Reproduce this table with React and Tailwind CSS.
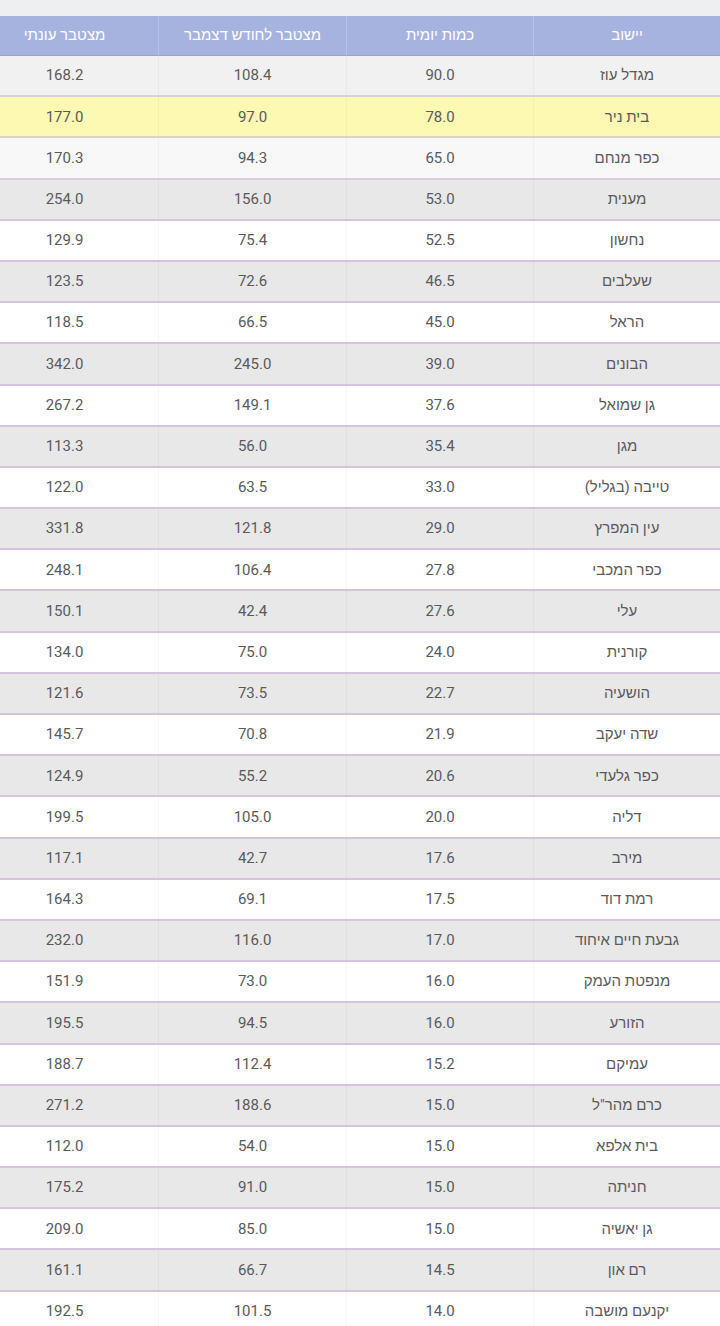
const rows = [
  ["מגדל עוז", "90.0", "108.4", "168.2", "first"],
  ["בית ניר", "78.0", "97.0", "177.0", "yellow"],
  ["כפר מנחם", "65.0", "94.3", "170.3", "third"],
  ["מענית", "53.0", "156.0", "254.0", "gray"],
  ["נחשון", "52.5", "75.4", "129.9", "white"],
  ["שעלבים", "46.5", "72.6", "123.5", "gray"],
  ["הראל", "45.0", "66.5", "118.5", "white"],
  ["הבונים", "39.0", "245.0", "342.0", "gray"],
  ["גן שמואל", "37.6", "149.1", "267.2", "white"],
  ["מגן", "35.4", "56.0", "113.3", "gray"],
  ["טייבה (בגליל)", "33.0", "63.5", "122.0", "white"],
  ["עין המפרץ", "29.0", "121.8", "331.8", "gray"],
  ["כפר המכבי", "27.8", "106.4", "248.1", "white"],
  ["עלי", "27.6", "42.4", "150.1", "gray"],
  ["קורנית", "24.0", "75.0", "134.0", "white"],
  ["הושעיה", "22.7", "73.5", "121.6", "gray"],
  ["שדה יעקב", "21.9", "70.8", "145.7", "white"],
  ["כפר גלעדי", "20.6", "55.2", "124.9", "gray"],
  ["דליה", "20.0", "105.0", "199.5", "white"],
  ["מירב", "17.6", "42.7", "117.1", "gray"],
  ["רמת דוד", "17.5", "69.1", "164.3", "white"],
  ["גבעת חיים איחוד", "17.0", "116.0", "232.0", "gray"],
  ["מנפטת העמק", "16.0", "73.0", "151.9", "white"],
  ["הזורע", "16.0", "94.5", "195.5", "gray"],
  ["עמיקם", "15.2", "112.4", "188.7", "white"],
  ["כרם מהר\"ל", "15.0", "188.6", "271.2", "gray"],
  ["בית אלפא", "15.0", "54.0", "112.0", "white"],
  ["חניתה", "15.0", "91.0", "175.2", "gray"],
  ["גן יאשיה", "15.0", "85.0", "209.0", "white"],
  ["רם און", "14.5", "66.7", "161.1", "gray"],
  ["יקנעם מושבה", "14.0", "101.5", "192.5", "white"],
];

const bgClass = {
  first: "bg-[#f1f1f1] border-[#d9d3cf]",
  yellow: "bg-[#fdf8b2] border-[#d9d3c3]",
  third: "bg-[#f8f8f8] border-[#d6cbdc]",
  gray: "bg-[#e8e8e8] border-[#d5c5dc]",
  white: "bg-white border-[#d5c5dc]",
};

const headers = ["יישוב", "כמות יומית", "מצטבר לחודש דצמבר", "מצטבר עונתי"];

export default function App() {
  return (
    <div
      dir="rtl"
      className="w-[720px] h-[1326px] overflow-hidden bg-white"
      style={{ fontFamily: "Roboto, 'Liberation Sans', 'DejaVu Sans', sans-serif" }}
    >
      <div className="h-[16px] bg-[#eeeff0]" />
      <div className="w-[749px]">
        <div className="grid grid-cols-[187px_187px_188px_187px] h-[40px] bg-[#a6b3de] border-b border-[#95a3d0]">
          {headers.map((h, i) => (
            <div
              key={i}
              className={`flex items-center justify-center text-white text-[15px] ${i < 3 ? "border-l border-[#b6c1e6]" : ""}`}
            >
              {h}
            </div>
          ))}
        </div>
        {rows.map((r, ri) => (
          <div
            key={ri}
            className={`grid grid-cols-[187px_187px_188px_187px] h-[41.2px] border-b-2 ${bgClass[r[4]]}`}
          >
            {r.slice(0, 4).map((c, ci) => (
              <div
                key={ci}
                className={`flex items-center justify-center text-[15px] text-[#5a5a5a] ${ci < 3 ? "border-l border-black/[0.03]" : ""}`}
              >
                {c}
              </div>
            ))}
          </div>
        ))}
      </div>
    </div>
  );
}
